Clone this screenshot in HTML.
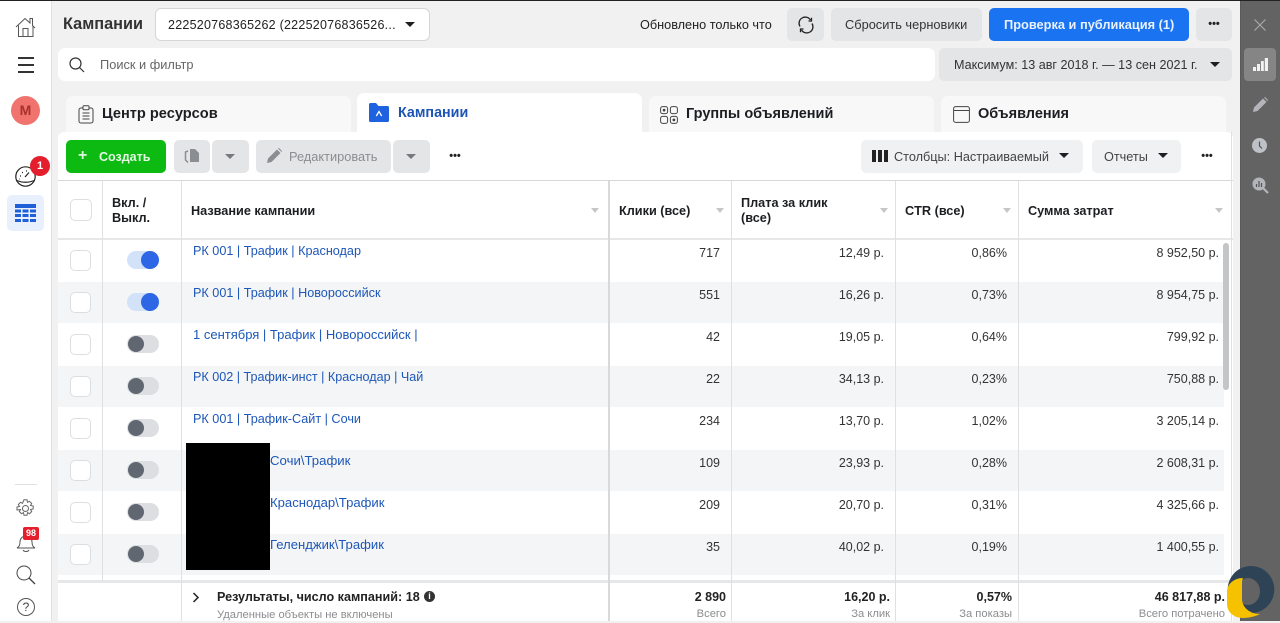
<!DOCTYPE html>
<html lang="ru"><head><meta charset="utf-8"><title>Кампании</title>
<style>
*{box-sizing:border-box}
html,body{margin:0;padding:0}
body{width:1280px;height:621px;position:relative;overflow:hidden;background:#f1f1f2;font-family:"Liberation Sans",sans-serif;color:#1c1e21;font-size:13px}
.a{position:absolute}
.t{position:absolute;white-space:nowrap;line-height:16px}
.r{position:absolute;white-space:nowrap;line-height:16px;text-align:right;font-size:12.5px;color:#333}
.l{position:absolute;white-space:nowrap;line-height:16px;font-size:12.65px;color:#1d57b8}
.btn{position:absolute;background:#e4e5e6;border-radius:5px}
.tri{position:absolute;width:0;height:0;border-left:5.5px solid transparent;border-right:5.5px solid transparent;border-top:5.5px solid #1c1e21}
.stri{position:absolute;width:0;height:0;border-left:4.5px solid transparent;border-right:4.5px solid transparent;border-top:5px solid #c4c7ca}
.cb{position:absolute;left:70px;width:21px;height:21px;background:#fff;border:1px solid #dcdee0;border-radius:5px}
.sw{position:absolute;left:127px;width:32px;height:18px;border-radius:9px;background:#dcdee1}
.sw i{position:absolute;top:1px;width:16px;height:16px;border-radius:50%;background:#606770;left:1px}
.sw.on{background:#d2e2f8}.sw.on i{background:#2d67e6;left:14px;top:0;width:18px;height:18px}
.v{position:absolute;width:1px;background:#dfe0e2}
.h{font-weight:bold;font-size:12.7px;color:#1c1e21}
.tab{position:absolute;top:96px;height:36px;background:#f8f8f9;border-radius:7px 7px 0 0}
.tabt{font-weight:bold;font-size:14.6px;color:#1c1e21}
.dots{position:absolute;white-space:nowrap;text-align:center;font-weight:bold;font-size:11px;line-height:14px;color:#222}
svg{position:absolute;overflow:visible}
</style></head><body>
<div class="a" style="left:0;top:0;width:1280px;height:1px;background:#222"></div>
<!-- sidebar -->
<div class="a" style="left:0;top:1px;width:52px;height:620px;background:#fff;border-right:1px solid #dfe0e2"></div>
<svg style="left:15px;top:16px" width="22" height="22" viewBox="0 0 22 22" fill="none" stroke="#555" stroke-width="1"><path d="M1 11 10 2.500 15 7V2.500h2.500V9.500L20 12M3.500 9.500V20.500H18V10M8 20.500V12.500H13V20.500"/></svg>
<div class="a" style="left:18px;top:57px;width:16px;height:2px;background:#333"></div>
<div class="a" style="left:18px;top:64px;width:16px;height:2px;background:#333"></div>
<div class="a" style="left:18px;top:71px;width:16px;height:2px;background:#333"></div>
<div class="a" style="left:11px;top:96px;width:29px;height:29px;border-radius:50%;background:#f0736e"></div>
<div class="t" style="left:11px;top:102px;width:29px;text-align:center;font-weight:bold;font-size:14px;color:#a9302c">M</div>
<svg style="left:15px;top:166px" width="21" height="21" viewBox="0 0 21 21" fill="none" stroke="#222" stroke-width="1.200"><circle cx="10.500" cy="10.500" r="9.700"/><path d="M1.500 14.500Q10.500 18 19.500 14.500M10 11 14 6.500"/><path d="M5 10h1M7 6.500h1M11 5h1M4.500 13h.5" stroke-width="1.300"/></svg>
<div class="a" style="left:30px;top:156px;width:20px;height:20px;border-radius:50%;background:#e41e2d"></div>
<div class="t" style="left:30px;top:158px;width:20px;text-align:center;font-weight:bold;font-size:11px;color:#fff">1</div>
<div class="a" style="left:7px;top:195px;width:37px;height:36px;border-radius:5px;background:#e7f0fc"></div>
<svg style="left:15px;top:203.500px" width="21" height="19" viewBox="0 0 21 19" fill="#1f5fd8"><rect width="21" height="4"/><rect y="5.500" width="6" height="3"/><rect x="7.500" y="5.500" width="6" height="3"/><rect x="15" y="5.500" width="6" height="3"/><rect y="10" width="6" height="3"/><rect x="7.500" y="10" width="6" height="3"/><rect x="15" y="10" width="6" height="3"/><rect y="15" width="6" height="3"/><rect x="7.500" y="15" width="6" height="3"/><rect x="15" y="15" width="6" height="3"/></svg>
<div class="a" style="left:15px;top:484px;width:22px;height:1px;background:#dfe0e2"></div>
<svg style="left:16px;top:499px" width="19" height="19" viewBox="0 0 19 19" fill="none" stroke="#666" stroke-width="1"><circle cx="9.500" cy="9.500" r="3"/><path d="M8 .8h3l.5 2.500 2-1 2.200 2.200-1.200 2 2.700.5v3l-2.700.5 1.200 2-2.200 2.200-2-1.100-.5 2.600H8l-.5-2.600-2 1.100-2.200-2.200 1.200-2L1 11V8l2.500-.5-1.200-2L4.500 3.300l2 1z"/></svg>
<svg style="left:16px;top:533px" width="20" height="20" viewBox="0 0 20 20" fill="none" stroke="#555" stroke-width="1"><path d="M1 15c2-1 3-3 3-6 0-3 2-6 6-6s6 3 6 6c0 3 1 5 3 6z"/><path d="M7 17c1 2 5 2 6 0"/></svg>
<div class="a" style="left:23px;top:527px;width:16px;height:13px;background:#e41e2d;border-radius:2px"></div>
<div class="t" style="left:23px;top:526px;width:16px;text-align:center;font-weight:bold;font-size:9px;line-height:14px;color:#fff">98</div>
<svg style="left:16px;top:565px" width="20" height="20" viewBox="0 0 20 20" fill="none" stroke="#444" stroke-width="1"><circle cx="8" cy="8" r="7"/><path d="M13 13 19 19" stroke-width="1.300"/></svg>
<div class="a" style="left:17px;top:598px;width:18px;height:18px;border-radius:50%;border:1px solid #555"></div>
<div class="t" style="left:17px;top:599px;width:18px;text-align:center;font-size:12px;color:#444">?</div>

<!-- top row -->
<div class="t" style="left:63px;top:16px;font-weight:bold;font-size:16.300px;color:#333">Кампании</div>
<div class="a" style="left:155px;top:8px;width:275px;height:33px;background:#fff;border:1px solid #d4d6d8;border-radius:6px"></div>
<div class="t" style="left:168px;top:17px;font-size:12.500px;letter-spacing:.24px;color:#222">222520768365262 (22252076836526...</div>
<div class="tri" style="left:405px;top:22px"></div>
<div class="t" style="left:640px;top:17px;font-size:12.700px;color:#222">Обновлено только что</div>
<div class="btn" style="left:787px;top:8px;width:37px;height:33px"></div>
<svg style="left:798px;top:17px" width="16" height="16" viewBox="0 0 16 16" fill="none" stroke="#222" stroke-width="1.300"><path d="M2 9.500A6 6 0 0 1 12.500 3M14 6.500A6 6 0 0 1 3.500 13"/><path d="M13.500.8V4H10.500M2.500 15.200V12H5.500"/></svg>
<div class="btn" style="left:831px;top:8px;width:151px;height:33px"></div>
<div class="t" style="left:845px;top:17px;font-size:12.800px;color:#333">Сбросить черновики</div>
<div class="a" style="left:989px;top:8px;width:200px;height:33px;background:#1a73f0;border-radius:5px"></div>
<div class="t" style="left:1004px;top:17px;font-size:12.800px;font-weight:bold;color:#e8f1ff">Проверка и публикация (1)</div>
<div class="btn" style="left:1196px;top:8px;width:36px;height:33px"></div>
<div class="dots" style="left:1196px;top:17px;width:36px">•••</div>

<!-- search -->
<div class="a" style="left:58px;top:48px;width:877px;height:33px;background:#fff;border-radius:7px"></div>
<svg style="left:69px;top:57px" width="16" height="16" viewBox="0 0 16 16" fill="none" stroke="#333" stroke-width="1.200"><circle cx="6.500" cy="6.500" r="5.500"/><path d="M10.500 10.500 15 15"/></svg>
<div class="t" style="left:100px;top:57px;font-size:12.800px;color:#666">Поиск и фильтр</div>
<div class="btn" style="left:939px;top:48px;width:293px;height:33px"></div>
<div class="t" style="left:954px;top:57px;font-size:12.600px;color:#333">Максимум: 13 авг 2018 г. — 13 сен 2021 г.</div>
<div class="tri" style="left:1210px;top:62px"></div>

<!-- tabs -->
<div class="tab" style="left:66px;width:285px"></div>
<svg style="left:78px;top:105px" width="16" height="19" viewBox="0 0 16 19" fill="none" stroke="#444" stroke-width="1"><rect x="1" y="3" width="14" height="15" rx="2"/><rect x="5" y=".8" width="6" height="4" rx="1" fill="#f8f8f9"/><path d="M4.500 8h7M4.500 11h7M4.500 14h7"/></svg>
<div class="t tabt" style="left:102px;top:106px">Центр ресурсов</div>
<div class="a" style="left:357px;top:93px;width:285px;height:42px;background:#fff;border-radius:7px 7px 0 0"></div>
<svg style="left:369px;top:103px" width="20" height="19" viewBox="0 0 20 19"><path d="M0 1.500Q0 0 1.500 0H7L9.500 3H18.500Q20 3 20 4.500V17.500Q20 19 18.500 19H1.500Q0 19 0 17.500Z" fill="#1f62e0"/><path d="M7.300 13 10 8.500 12.700 13" fill="none" stroke="#fff" stroke-width="1.300"/></svg>
<div class="t" style="left:398px;top:105px;font-weight:bold;font-size:14.300px;color:#1d55b5">Кампании</div>
<div class="tab" style="left:649px;width:285px"></div>
<svg style="left:660px;top:106px" width="18" height="18" viewBox="0 0 18 18" fill="none" stroke="#444" stroke-width="1"><rect x=".6" y=".6" width="7" height="7" rx="2"/><rect x="10.400" y=".6" width="7" height="7" rx="2"/><rect x=".6" y="10.400" width="7" height="7" rx="2"/><rect x="10.400" y="10.400" width="7" height="7" rx="2"/><circle cx="4.100" cy="4.100" r=".9" fill="#444"/><circle cx="13.900" cy="13.900" r=".9" fill="#444"/></svg>
<div class="t tabt" style="left:686px;top:106px;font-size:14.500px">Группы объявлений</div>
<div class="tab" style="left:941px;width:285px"></div>
<svg style="left:953px;top:106px" width="17" height="17" viewBox="0 0 17 17" fill="none" stroke="#444" stroke-width="1"><rect x=".6" y=".6" width="15.800" height="15.800" rx="2"/><path d="M.6 4.500H16.400"/></svg>
<div class="t tabt" style="left:978px;top:106px;font-size:14.500px">Объявления</div>

<!-- panel -->
<div class="a" style="left:58px;top:132px;width:1175px;height:489px;background:#fff;border-radius:6px 6px 0 0"></div>
<div class="a" style="left:357px;top:125px;width:285px;height:12px;background:#fff"></div>
<div class="a" style="left:66px;top:140px;width:100px;height:33px;background:#0cba12;border-radius:5px"></div>
<div class="t" style="left:78px;top:148px;font-weight:bold;font-size:16px;color:#dff7df">+</div>
<div class="t" style="left:99px;top:149px;font-weight:bold;font-size:12.500px;color:#e4f8e4">Создать</div>
<div class="btn" style="left:174px;top:140px;width:36px;height:33px"></div>
<svg style="left:184px;top:148px" width="16" height="16" viewBox="0 0 16 16"><path d="M6 1h5l4 4v9H6z" fill="#8a8d91"/><path d="M4 3 1.500 4V12L4 14.500" fill="none" stroke="#8a8d91" stroke-width="1.500"/></svg>
<div class="btn" style="left:212px;top:140px;width:37px;height:33px"></div>
<div class="tri" style="left:225px;top:154px;border-top-color:#77797d;border-left-width:5px;border-right-width:5px;border-top-width:5px"></div>
<div class="btn" style="left:256px;top:140px;width:135px;height:33px"></div>
<svg style="left:267px;top:148px" width="15" height="15" viewBox="0 0 15 15"><path d="M0 15 1 10.500 10 1.500 13.500 5 4.500 14ZM11 .5 12 0 15 3 14.500 4Z" fill="#8a8d91"/></svg>
<div class="t" style="left:289px;top:149px;font-size:12.800px;color:#8b8d90">Редактировать</div>
<div class="btn" style="left:393px;top:140px;width:37px;height:33px"></div>
<div class="tri" style="left:406px;top:154px;border-top-color:#77797d;border-left-width:5px;border-right-width:5px;border-top-width:5px"></div>
<div class="dots" style="left:445px;top:149px;width:20px">•••</div>
<div class="btn" style="left:861px;top:140px;width:222px;height:33px;background:#f0f1f2"></div>
<div class="a" style="left:872px;top:150px;width:3.500px;height:12px;background:#222"></div>
<div class="a" style="left:878px;top:150px;width:3.500px;height:12px;background:#222"></div>
<div class="a" style="left:884px;top:150px;width:3.500px;height:12px;background:#222"></div>
<div class="t" style="left:894px;top:149px;font-size:12.700px;color:#444">Столбцы: Настраиваемый</div>
<div class="tri" style="left:1059px;top:153px"></div>
<div class="btn" style="left:1092px;top:140px;width:89px;height:33px;background:#f0f1f2"></div>
<div class="t" style="left:1104px;top:149px;font-size:12.700px;color:#444">Отчеты</div>
<div class="tri" style="left:1158px;top:153px"></div>
<div class="dots" style="left:1197px;top:149px;width:20px">•••</div>

<!-- table structure -->
<div class="a" style="left:58px;top:180px;width:1175px;height:1px;background:#d6d7d9"></div>
<div class="a" style="left:58px;top:238px;width:1175px;height:2px;background:#e6e7e8"></div>
<div class="a" style="left:58px;top:282px;width:1166px;height:41px;background:#f4f5f6"></div>
<div class="a" style="left:58px;top:366px;width:1166px;height:41px;background:#f4f5f6"></div>
<div class="a" style="left:58px;top:450px;width:1166px;height:41px;background:#f4f5f6"></div>
<div class="a" style="left:58px;top:534px;width:1166px;height:41px;background:#f4f5f6"></div>
<div class="a" style="left:58px;top:580px;width:1175px;height:3px;background:#e6e7e8"></div>
<div class="v" style="left:102px;top:181px;height:400px"></div>
<div class="v" style="left:181px;top:181px;height:440px"></div>
<div class="a" style="left:608px;top:181px;width:2px;height:440px;background:#d8d9db"></div>
<div class="v" style="left:731px;top:181px;height:440px"></div>
<div class="v" style="left:895px;top:181px;height:440px"></div>
<div class="v" style="left:1018px;top:181px;height:440px"></div>
<div class="v" style="left:1231px;top:132px;height:489px"></div>

<!-- header -->
<div class="a" style="left:70px;top:199px;width:22px;height:22px;background:#fff;border:1px solid #dcdee0;border-radius:5px"></div>
<div class="t h" style="left:112px;top:196px;line-height:15px">Вкл. /<br>Выкл.</div>
<div class="t h" style="left:191px;top:203px">Название кампании</div>
<div class="stri" style="left:591px;top:208px"></div>
<div class="t h" style="left:619px;top:203px">Клики (все)</div>
<div class="stri" style="left:716px;top:208px"></div>
<div class="t h" style="left:741px;top:196px;line-height:15px">Плата за клик<br>(все)</div>
<div class="stri" style="left:880px;top:208px"></div>
<div class="t h" style="left:905px;top:203px">CTR (все)</div>
<div class="stri" style="left:1003px;top:208px"></div>
<div class="t h" style="left:1028px;top:203px">Сумма затрат</div>
<div class="stri" style="left:1215px;top:208px"></div>

<!-- checkboxes / toggles -->
<div class="cb" style="top:250px"></div><div class="sw on" style="top:251px"><i></i></div>
<div class="cb" style="top:292px"></div><div class="sw on" style="top:293px"><i></i></div>
<div class="cb" style="top:334px"></div><div class="sw" style="top:335px"><i></i></div>
<div class="cb" style="top:376px"></div><div class="sw" style="top:377px"><i></i></div>
<div class="cb" style="top:418px"></div><div class="sw" style="top:419px"><i></i></div>
<div class="cb" style="top:460px"></div><div class="sw" style="top:461px"><i></i></div>
<div class="cb" style="top:502px"></div><div class="sw" style="top:503px"><i></i></div>
<div class="cb" style="top:544px"></div><div class="sw" style="top:545px"><i></i></div>

<!-- names -->
<div class="l" style="left:193px;top:243px">РК 001 | Трафик | Краснодар</div>
<div class="l" style="left:193px;top:285px">РК 001 | Трафик | Новороссийск</div>
<div class="l" style="left:193px;top:327px;font-size:13px">1 сентября | Трафик | Новороссийск |</div>
<div class="l" style="left:193px;top:369px;font-size:12.600px">РК 002 | Трафик-инст | Краснодар | Чай</div>
<div class="l" style="left:193px;top:411px">РК 001 | Трафик-Сайт | Сочи</div>
<div class="a" style="left:186px;top:443px;width:84px;height:127px;background:#000"></div>
<div class="l" style="left:270px;top:453px;font-size:13.200px">Сочи\Трафик</div>
<div class="l" style="left:270px;top:495px;font-size:13.100px">Краснодар\Трафик</div>
<div class="l" style="left:270px;top:537px;font-size:13.100px">Геленджик\Трафик</div>

<!-- numbers -->
<div class="r" style="right:560px;top:245px">717</div><div class="r" style="right:396px;top:245px">12,49 р.</div><div class="r" style="right:273px;top:245px">0,86%</div><div class="r" style="right:61px;top:245px">8 952,50 р.</div>
<div class="r" style="right:560px;top:287px">551</div><div class="r" style="right:396px;top:287px">16,26 р.</div><div class="r" style="right:273px;top:287px">0,73%</div><div class="r" style="right:61px;top:287px">8 954,75 р.</div>
<div class="r" style="right:560px;top:329px">42</div><div class="r" style="right:396px;top:329px">19,05 р.</div><div class="r" style="right:273px;top:329px">0,64%</div><div class="r" style="right:61px;top:329px">799,92 р.</div>
<div class="r" style="right:560px;top:371px">22</div><div class="r" style="right:396px;top:371px">34,13 р.</div><div class="r" style="right:273px;top:371px">0,23%</div><div class="r" style="right:61px;top:371px">750,88 р.</div>
<div class="r" style="right:560px;top:413px">234</div><div class="r" style="right:396px;top:413px">13,70 р.</div><div class="r" style="right:273px;top:413px">1,02%</div><div class="r" style="right:61px;top:413px">3 205,14 р.</div>
<div class="r" style="right:560px;top:455px">109</div><div class="r" style="right:396px;top:455px">23,93 р.</div><div class="r" style="right:273px;top:455px">0,28%</div><div class="r" style="right:61px;top:455px">2 608,31 р.</div>
<div class="r" style="right:560px;top:497px">209</div><div class="r" style="right:396px;top:497px">20,70 р.</div><div class="r" style="right:273px;top:497px">0,31%</div><div class="r" style="right:61px;top:497px">4 325,66 р.</div>
<div class="r" style="right:560px;top:539px">35</div><div class="r" style="right:396px;top:539px">40,02 р.</div><div class="r" style="right:273px;top:539px">0,19%</div><div class="r" style="right:61px;top:539px">1 400,55 р.</div>

<!-- scrollbar -->
<div class="a" style="left:1223px;top:243px;width:6px;height:147px;background:#c4c5c7;border-radius:3px"></div>

<!-- footer -->
<svg style="left:192px;top:592px" width="8" height="11" viewBox="0 0 8 11" fill="none" stroke="#222" stroke-width="1.500"><path d="M1.500 1 6 5.500 1.500 10"/></svg>
<div class="t" style="left:217px;top:589px;font-weight:bold;font-size:12.600px;color:#222">Результаты, число кампаний: 18</div>
<div class="a" style="left:424px;top:591px;width:11px;height:11px;border-radius:50%;background:#333"></div>
<div class="t" style="left:424px;top:591px;width:11px;text-align:center;font-weight:bold;font-size:9px;line-height:11px;color:#fff">i</div>
<div class="t" style="left:217px;top:607px;font-size:11.200px;color:#8b8d90">Удаленные объекты не включены</div>
<div class="r" style="right:554px;top:589px;font-weight:bold;color:#222">2 890</div><div class="r" style="right:554px;top:606px;font-size:11.200px;color:#8b8d90">Всего</div>
<div class="r" style="right:390px;top:589px;font-weight:bold;color:#222">16,20 р.</div><div class="r" style="right:390px;top:606px;font-size:11.200px;color:#8b8d90">За клик</div>
<div class="r" style="right:268px;top:589px;font-weight:bold;color:#222">0,57%</div><div class="r" style="right:268px;top:606px;font-size:11.200px;color:#8b8d90">За показы</div>
<div class="r" style="right:55px;top:589px;font-weight:bold;color:#222">46 817,88 р.</div><div class="r" style="right:55px;top:606px;font-size:11.200px;color:#8b8d90">Всего потрачено</div>

<!-- right panel -->
<div class="a" style="left:1240px;top:1px;width:40px;height:620px;background:#636363;border-left:1px solid #5a5a5a"></div>
<svg style="left:1254px;top:19px" width="12" height="12" viewBox="0 0 12 12" stroke="#a8a8a8" stroke-width="1.200"><path d="M.5.500 11.500 11.500M11.500.5.500 11.500"/></svg>
<div class="a" style="left:1244px;top:48px;width:32px;height:33px;background:#858585;border-radius:4px"></div>
<svg style="left:1253px;top:58px" width="15" height="13" viewBox="0 0 15 13" fill="#f2f2f2"><rect y="9" width="3" height="4"/><rect x="4" y="6" width="3" height="7"/><rect x="8" y="3" width="2.800" height="10"/><rect x="11.800" y="0" width="3.200" height="13"/></svg>
<svg style="left:1253px;top:97px" width="15" height="15" viewBox="0 0 15 15"><path d="M0 15 1 10.500 10 1.500 13.500 5 4.500 14ZM11 .5 12 0 15 3 14.500 4Z" fill="#b4b5ba"/></svg>
<div class="a" style="left:1252px;top:138px;width:15px;height:15px;border-radius:50%;background:#bfc1c8"></div>
<svg style="left:1252px;top:138px" width="15" height="15" viewBox="0 0 15 15" fill="none" stroke="#555" stroke-width="1.200"><path d="M7.500 3.500V8L10 10.500"/></svg>
<svg style="left:1252px;top:177px" width="17" height="17" viewBox="0 0 17 17"><circle cx="7" cy="7" r="6.500" fill="#b4b5ba"/><path d="M11 11 16 16" stroke="#b4b5ba" stroke-width="2.200"/><path d="M4.500 7v3M7 4v6M9.500 6v4" stroke="#555" stroke-width="1.200"/></svg>

<!-- logo -->
<svg style="left:1226px;top:566px" width="50" height="55" viewBox="0 0 50 55"><path fill-rule="evenodd" fill="#2f4357" d="M1.700 23.500A23.300 23.500 0 1 1 48.300 23.500A23.300 23.500 0 1 1 1.700 23.500ZM10 25.500A12 13.500 0 1 0 34 25.500A12 13.500 0 1 0 10 25.500Z"/><path fill="#f6c200" d="M17 12C8 12 1 18 1 26V38C1 46 8 52 17 52C24 52 30 50 34 48C24 48 17 42 16 34V20C16 16 16 14 17 12Z"/></svg>
</body></html>
